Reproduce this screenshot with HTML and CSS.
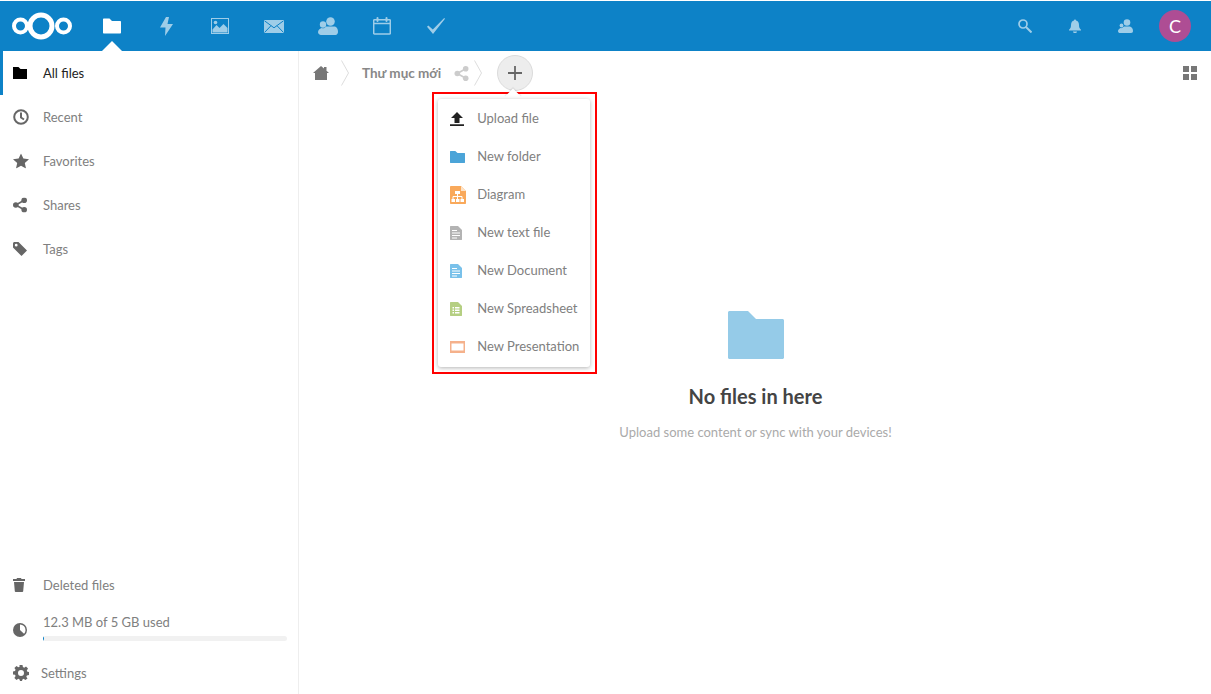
FILE: index.html
```html
<!DOCTYPE html>
<html lang="en">
<head>
<meta charset="utf-8">
<title>Files</title>
<link rel="stylesheet" href="styles.css">
</head>
<body>
<header class="topbar">
  <svg class="logo" width="62" height="30" viewBox="0 0 62 30"><g fill="none" stroke="#fff"><circle cx="30" cy="15" r="11" stroke-width="5"/><circle cx="9.500" cy="15" r="6.500" stroke-width="4"/><circle cx="52.500" cy="15" r="6.500" stroke-width="4"/></g></svg>
  <nav class="apps">
    <a class="app active"><svg width="18" height="16" viewBox="0 0 18 16"><path fill="#fff" d="M0 1.500C0 .9.400.5 1 .5h5.500l2.500 2.500h8c.6 0 1 .4 1 1v10.500c0 .6-.4 1-1 1H1c-.6 0-1-.4-1-1z"/></svg></a>
    <a class="app"><svg width="13" height="19" viewBox="0 0 13 19"><path fill="#fff" d="M6 0 0 10.500h5.500L5 19l8-12H7.500L9 0z"/></svg></a>
    <a class="app"><svg width="18" height="16" viewBox="0 0 18 16"><path fill="#fff" fill-rule="evenodd" d="M0 0h18v16H0zm1 1v14h16V1z"/><path fill="#fff" d="M1.500 14.500v-3l4-4.500 3 3 4-4 4 4v4.500z"/><circle cx="4.500" cy="4.500" r="1.800" fill="#fff"/></svg></a>
    <a class="app"><svg width="20" height="13" viewBox="0 0 20 13"><path fill="#fff" d="M0 0h20v13H0z"/><path fill="none" stroke="#0d82c7" d="m.5.800 9.500 7 9.500-7M.5 12.500l6.500-6.800m12.500 6.800L13 5.700"/></svg></a>
    <a class="app"><svg width="20" height="18" viewBox="0 0 20 18"><circle cx="12.500" cy="4.500" r="4.300" fill="#fff"/><path fill="#fff" d="M8 9.500h9c2 1 3 2.500 3 5.500 0 1.500-1 3-2.500 3H4c-1.500 0-4-.5-4-3 0-2.500 2.500-3.500 3.500-4 1 .3 2 .3 3 0z"/><circle cx="5" cy="7.500" r="3.200" fill="#fff"/></svg></a>
    <a class="app"><svg width="18" height="18" viewBox="0 0 18 18"><path fill="none" stroke="#fff" stroke-width="1.500" d="M1.500 2.800h15c.5 0 .8.300.8.800v12.600c0 .5-.3.800-.8.800h-15c-.5 0-.8-.3-.8-.8V3.600c0-.5.300-.8.800-.8zM.7 6.500h16.600"/><path stroke="#fff" stroke-width="2" stroke-linecap="round" d="M4.500 1v3m9-3v3"/></svg></a>
    <a class="app"><svg width="18" height="16" viewBox="0 0 18 16"><path fill="#fff" d="M0 8.800 1.300 7.500l4.500 4L17.200 0l.8.800L6 16z"/></svg></a>
  </nav>
  <div class="tools">
    <a class="tool"><svg width="14" height="14" viewBox="0 0 14 14"><circle cx="5" cy="5" r="4" fill="none" stroke="#fff" stroke-width="1.700"/><path stroke="#fff" stroke-width="2" d="m8 8 5.500 5.500"/></svg></a>
    <a class="tool"><svg width="12" height="14" viewBox="0 0 12 14"><path fill="#fff" d="M6 .5c.6 0 1 .4 1 1 2 .5 3 2.200 3 4.500 0 2.500.5 3.500 2 4.700v.8H0v-.8C1.500 9.500 2 8.500 2 6c0-2.300 1-4 3-4.500 0-.6.400-1 1-1zM4 12.500h4c0 1-.8 1.500-2 1.500s-2-.5-2-1.500z"/></svg></a>
    <a class="tool"><svg width="15" height="14" viewBox="0 0 15 14"><circle cx="9" cy="3.500" r="3.300" fill="#fff"/><path fill="#fff" d="M6 7.500h6c2 1 3 2 3 4.500 0 1-.6 2-2 2H2c-1 0-2-.5-2-2 0-1.500 1.500-2.500 2.500-3 .5.200 1 .2 1.500 0z"/><circle cx="3.500" cy="6.500" r="1.900" fill="#fff"/></svg></a>
    <a class="tool"><span class="avatar">C</span></a>
  </div>
</header>
<div class="layout">
  <aside class="sidebar">
    <ul class="navlist">
      <li class="navitem current"><svg class="navicon" width="14" height="12" viewBox="0 0 14 12"><path fill="#000" d="M0 0h5.500l2 2H14v10H0z"/></svg><span>All files</span></li>
      <li class="navitem"><svg class="navicon" width="16" height="16" viewBox="0 0 16 16"><circle cx="8" cy="8" r="6.800" fill="none" stroke="#666" stroke-width="2"/><path fill="none" stroke="#666" stroke-width="2" d="M8 3.500V8.500l3 2"/></svg><span>Recent</span></li>
      <li class="navitem"><svg class="navicon" width="16" height="15" viewBox="0 0 16 15"><path fill="#666" d="m8 0 2.400 5.100 5.600.6-4.200 3.700 1.200 5.600L8 12.200 3 15l1.200-5.600L0 5.700l5.600-.6z"/></svg><span>Favorites</span></li>
      <li class="navitem"><svg class="navicon" width="14" height="15" viewBox="0 0 14 15"><circle cx="2.800" cy="7.500" r="2.800" fill="#666"/><circle cx="11.200" cy="2.800" r="2.800" fill="#666"/><circle cx="11.200" cy="12.200" r="2.800" fill="#666"/><path stroke="#666" stroke-width="1.600" d="m2.800 7.500 8.400-4.700M2.800 7.500l8.400 4.700"/></svg><span>Shares</span></li>
      <li class="navitem"><svg class="navicon" width="14" height="14" viewBox="0 0 14 14"><path fill="#666" d="M0 1.500C0 .7.700 0 1.500 0h4L14 8.500 8.500 14 0 5.500zm3.200.3a1.400 1.400 0 1 0 0 2.800 1.400 1.400 0 0 0 0-2.800z"/></svg><span>Tags</span></li>
    </ul>
    <ul class="navlist">
      <li class="navitem"><svg class="navicon" width="12" height="14" viewBox="0 0 12 14"><path fill="#666" d="M4 0h4l.5 1H12v2H0V1h3.500zM1 4h10l-.8 9.200c0 .5-.4.800-.9.800H2.700c-.5 0-.9-.3-.9-.8z"/></svg><span>Deleted files</span></li>
      <li class="quota">
        <svg class="navicon" width="14" height="14" viewBox="0 0 14 14"><circle cx="7" cy="7" r="7" fill="#666"/><path fill="#fff" d="M7 1.500A5.500 5.500 0 0 1 12.500 7c0 1.500-.5 2.800-1.500 3.800L7 7z"/></svg>
        <span class="quotatext">12.3 MB of 5 GB used</span>
        <div class="bar"><div class="barfill"></div></div>
      </li>
      <li class="navitem settings"><svg class="navicon" width="16" height="16" viewBox="0 0 16 16"><path fill="#666" fill-rule="evenodd" d="M6.500 0h3l.4 2.100 1.300.6L13 1.500 15 3.600l-1.200 1.800.6 1.300 1.600.3v3l-2.100.4-.6 1.300 1.200 1.800L12.400 15l-1.800-1.200-1.200.6L9 16H7l-.4-1.600-1.300-.6L3.500 15l-2.100-2.100 1.200-1.800-.6-1.300L0 9.500v-3l2-.4.600-1.300L1.400 3 3.500 1l1.800 1.300 1.300-.6zM8 5a3 3 0 1 0 0 6 3 3 0 0 0 0-6z"/></svg><span>Settings</span></li>
    </ul>
  </aside>
  <main class="content">
    <div class="crumbs">
      <svg class="home" width="16" height="14" viewBox="0 0 16 14"><path fill="#777" d="M8 0 11 2.600V1h2.500v3.800L16 7h-2v7H2V7H0z"/></svg>
      <svg class="chevron" width="8" height="26" viewBox="0 0 8 26"><path fill="none" stroke="#ddd" d="m.5.500 7 12.500-7 12.500"/></svg>
      <span class="crumb">Thư mục mới</span>
      <svg class="share" width="15" height="15" viewBox="0 0 14 15"><circle cx="2.800" cy="7.500" r="2.800" fill="#ccc"/><circle cx="11.200" cy="2.800" r="2.800" fill="#ccc"/><circle cx="11.200" cy="12.200" r="2.800" fill="#ccc"/><path stroke="#ccc" stroke-width="1.600" d="m2.800 7.500 8.400-4.700M2.800 7.500l8.400 4.700"/></svg>
      <svg class="chevron last" width="8" height="26" viewBox="0 0 8 26"><path fill="none" stroke="#ddd" d="m.5.500 7 12.500-7 12.500"/></svg>
      <div class="addwrap">
        <button class="addbtn"><svg width="14" height="14" viewBox="0 0 14 14"><path stroke="#666" stroke-width="1.800" d="M7 0v14M0 7h14"/></svg></button>
        <div class="highlight">
          <ul class="menu">
            <li class="menuitem"><svg class="menuicon" width="14" height="14" viewBox="0 0 14 14"><path fill="#222" d="M7 0l6 6H9.500v5h-5V6H1zM0 12.300h14V14H0z"/></svg><span>Upload file</span></li>
            <li class="menuitem"><svg class="menuicon" width="15" height="12" viewBox="0 0 15 12"><path fill="#4ba4d8" d="M0 .5C0 .2.200 0 .5 0h4.800L7.500 2h7c.3 0 .5.200.5.500v9c0 .3-.2.500-.5.500h-14c-.3 0-.5-.2-.5-.5z"/></svg><span>New folder</span></li>
            <li class="menuitem"><svg class="menuicon" width="16" height="18" viewBox="0 0 16 18"><path fill="#f9a95b" d="M0 .8C0 .3.300 0 .8 0H11l5 5v12.200c0 .5-.3.800-.8.800H.8c-.5 0-.8-.3-.8-.8z"/><path fill="#fde3c8" d="M11 0v5h5z"/><path fill="#fff" d="M5 5h5v3H5zM1.500 13h3.500v3H1.500zm4.500 0h3.500v3H6zm4.500 0H14v3h-3.500z"/><path fill="none" stroke="#fff" d="M7.500 8v5M3 13v-2.500h9V13"/></svg><span>Diagram</span></li>
            <li class="menuitem"><svg class="menuicon" width="12" height="14" viewBox="0 0 12 14"><path fill="#b3b3b3" d="M0 .5C0 .2.200 0 .5 0H8l4 4v9.500c0 .3-.2.500-.5.500H.5c-.3 0-.5-.2-.5-.5z"/><path stroke="#fff" d="M2 4.500h5M2 7h8M2 9.500h8M2 12h5"/></svg><span>New text file</span></li>
            <li class="menuitem"><svg class="menuicon" width="12" height="14" viewBox="0 0 12 14"><path fill="#79c1ea" d="M0 .5C0 .2.200 0 .5 0H8l4 4v9.500c0 .3-.2.500-.5.500H.5c-.3 0-.5-.2-.5-.5z"/><path stroke="#fff" d="M2 4.500h5M2 7h8M2 9.500h8M2 12h5"/></svg><span>New Document</span></li>
            <li class="menuitem"><svg class="menuicon" width="12" height="14" viewBox="0 0 12 14"><path fill="#b5cf82" d="M0 .5C0 .2.200 0 .5 0H8l4 4v9.500c0 .3-.2.500-.5.500H.5c-.3 0-.5-.2-.5-.5z"/><path fill="#fff" d="M2.500 5H4v1.500H2.500zm2.500 0h4.500v1.500H5zM2.500 7.500H4V9H2.500zm2.500 0h4.500V9H5zM2.500 10H4v1.500H2.500zm2.500 0h4.500v1.500H5z"/></svg><span>New Spreadsheet</span></li>
            <li class="menuitem"><svg class="menuicon" width="15" height="12" viewBox="0 0 15 12"><path fill="#f5b18b" fill-rule="evenodd" d="M0 0h15v12H0zm1.500 2.500v7h12v-7z"/></svg><span>New Presentation</span></li>
          </ul>
        </div>
      </div>
      <svg class="viewtoggle" width="14" height="14" viewBox="0 0 14 14"><path fill="#777" d="M0 0h6v6H0zm8 0h6v6H8zM0 8h6v6H0zm8 0h6v6H8z"/></svg>
    </div>
    <section class="empty">
      <svg width="56" height="48" viewBox="0 0 56 48"><path fill="#95cbe8" d="M0 1.500C0 .7.700 0 1.500 0H20l8 8h26.500c.8 0 1.500.7 1.500 1.500v37c0 .8-.7 1.500-1.500 1.500h-53C.7 48 0 47.300 0 46.500z"/></svg>
      <h2>No files in here</h2>
      <p>Upload some content or sync with your devices!</p>
    </section>
  </main>
</div>
</body>
</html>
```
FILE: styles.css
```css
* { box-sizing: border-box; }
html, body { height: 100%; }
body {
  margin: 0;
  padding-top: 1px;
  display: flex;
  flex-direction: column;
  overflow: hidden;
  background: #fff;
  color: #808080;
  font-family: "Lato", "Open Sans", sans-serif;
  font-size: 13px;
}
ul { list-style: none; margin: 0; padding: 0; }

.topbar {
  height: 50px;
  flex: none;
  display: flex;
  align-items: center;
  background: #0d82c7;
}
.logo { margin-left: 11px; margin-right: 12px; flex: none; }
.apps { display: flex; height: 100%; }
.app {
  position: relative;
  width: 54px;
  display: flex;
  align-items: center;
  justify-content: center;
}
.app svg, .tool svg { opacity: .6; }
.app.active svg { opacity: 1; }
.app.active::after {
  content: "";
  position: absolute;
  left: 17px;
  bottom: 0;
  border: 10px solid transparent;
  border-top: 0;
  border-bottom-color: #fff;
}
.tools { display: flex; height: 100%; margin-left: auto; padding-right: 11px; }
.tool {
  width: 50px;
  display: flex;
  align-items: center;
  justify-content: center;
}
.avatar {
  width: 32px;
  height: 32px;
  border-radius: 50%;
  background: #ae4d94;
  color: #fff;
  font-size: 18px;
  display: flex;
  align-items: center;
  justify-content: center;
}

.layout { flex: 1; display: flex; min-height: 0; }
.sidebar {
  width: 299px;
  flex: none;
  display: flex;
  flex-direction: column;
  justify-content: space-between;
  border-right: 1px solid #eee;
}
.navitem {
  height: 44px;
  display: flex;
  align-items: center;
  padding-left: 43px;
  padding-bottom: 1px;
  position: relative;
}
.navicon { position: absolute; left: 13px; top: 50%; transform: translateY(-50%); }
.navitem.current { color: #222; box-shadow: inset 3px 0 0 #0d82c7; }
.quota {
  position: relative;
  height: 45px;
  padding: 6px 11px 0 43px;
}
.quotatext { display: block; line-height: 18px; }
.bar { height: 5px; margin-top: 5px; border-radius: 3px; background: #f1f1f1; overflow: hidden; }
.barfill { width: 1px; height: 100%; background: #0d82c7; }
.settings { padding-left: 41px; height: 42px; }

.content { flex: 1; min-width: 0; display: flex; flex-direction: column; }
.crumbs {
  height: 44px;
  flex: none;
  display: flex;
  align-items: center;
  padding-left: 14px;
  padding-right: 14px;
}
.home { flex: none; }
.chevron { margin-left: 12px; flex: none; }
.crumb { margin-left: 13px; font-weight: 700; font-size: 13.5px; color: #888; }
.share { margin-left: 13px; flex: none; }
.chevron.last { margin-left: 5px; }
.addwrap { position: relative; margin-left: 15px; }
.addbtn {
  width: 36px;
  height: 36px;
  padding: 0;
  border-radius: 50%;
  border: 1px solid #dbdbdb;
  background: #ededed;
  display: flex;
  align-items: center;
  justify-content: center;
}
.highlight {
  position: absolute;
  left: -65px;
  top: 37px;
  width: 165px;
  height: 282px;
  border: 2px solid #f00;
  padding: 5px 4px;
  z-index: 2;
}
.highlight::before {
  content: "";
  position: absolute;
  left: 73px;
  top: -3px;
  width: 12px;
  height: 12px;
  transform: rotate(45deg);
  background: #fff;
  box-shadow: -1px -1px 1px rgba(0,0,0,.08);
}
.menu {
  position: relative;
  height: 268px;
  width: 152px;
  padding-top: 1px;
  background: #fff;
  border-radius: 3px;
  box-shadow: 0 1px 4px rgba(0,0,0,.3);
}
.menuitem {
  position: relative;
  height: 38px;
  display: flex;
  align-items: center;
  padding-left: 39px;
  padding-bottom: 3px;
  white-space: nowrap;
}
.menuicon { position: absolute; left: 12px; top: 50%; transform: translateY(-50%); }
.viewtoggle { margin-left: auto; flex: none; }

.empty {
  display: flex;
  flex-direction: column;
  align-items: center;
  padding-top: 216px;
  padding-left: 1px;
}
.empty h2 {
  margin: 24px 0 0;
  font-size: 20px;
  line-height: 26px;
  font-weight: 700;
  color: #444;
}
.empty p {
  margin: 14px 0 0;
  line-height: 18px;
  color: #aaa;
}
```
